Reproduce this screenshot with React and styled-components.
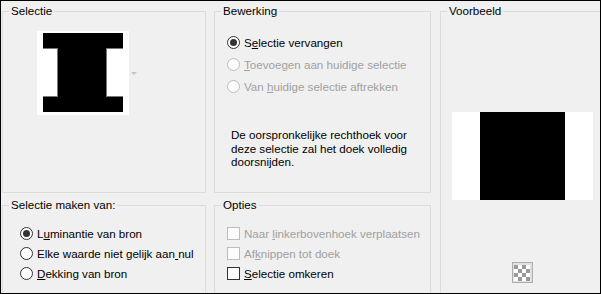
import React from 'react';
import styled, { createGlobalStyle } from 'styled-components';

const GlobalStyle = createGlobalStyle`
  html, body {
    margin: 0;
    padding: 0;
    background: #f0f0f0;
  }
  * {
    box-sizing: border-box;
  }
`;

const Window = styled.div`
  width: 601px;
  height: 294px;
  border: 1px solid #000;
  background: #f0f0f0;
  overflow: hidden;
  display: grid;
  grid-template-columns: 204px 217px 165px;
  grid-template-rows: 190px 100px;
  column-gap: 8px;
  row-gap: 4px;
  padding: 2px 0 0 1px;
  font-family: "Liberation Sans", Arial, sans-serif;
  font-size: 11.6px;
  color: #000;
`;

const Group = styled.fieldset`
  margin: 0;
  padding: 0;
  min-width: 0;
  border: 1px solid #dcdcdc;
  grid-column: ${p => p.$col};
  grid-row: ${p => p.$row};
  margin-left: ${p => p.$shift || 0}px;
`;

const Legend = styled.legend`
  margin-left: 6px;
  padding: 0 2px;
  line-height: 16px;
  font-size: 11.6px;
`;

const Picker = styled.div`
  display: flex;
  align-items: center;
  gap: 2px;
  margin: 12px 0 0 34px;
`;

const Options = styled.div`
  display: flex;
  flex-direction: column;
  margin: ${p => p.$top}px 0 0 ${p => p.$left}px;
`;

const Row = styled.div`
  display: flex;
  align-items: center;
  gap: 4px;
  height: ${p => p.$h}px;
  color: ${p => p.$disabled ? '#a0a0a0' : '#000'};
  white-space: nowrap;
`;

const Radio = styled.span`
  width: 13px;
  height: 13px;
  flex: none;
  border-radius: 50%;
  border: 1px solid ${p => p.$disabled ? '#bcbcbc' : '#333'};
  background: ${p => p.$disabled ? '#fcfcfc' : '#fff'};
  display: flex;
  align-items: center;
  justify-content: center;

  &::after {
    content: "";
    width: 7px;
    height: 7px;
    border-radius: 50%;
    background: #333;
    display: ${p => p.$checked ? 'block' : 'none'};
  }
`;

const Check = styled.span`
  width: 13px;
  height: 13px;
  flex: none;
  border: 1px solid ${p => p.$disabled ? '#bcbcbc' : '#333'};
  background: ${p => p.$disabled ? '#fcfcfc' : '#fff'};
`;

const Note = styled.p`
  margin: 30px 0 0 16px;
  width: 190px;
  line-height: 13.5px;
`;

const Preview = styled.div`
  display: flex;
  flex-direction: column;
  align-items: center;
  padding-top: 93px;
  gap: 62px;
`;

const PreviewImage = styled.div`
  width: 141px;
  height: 88px;
  background: #fff;
  display: flex;
  justify-content: center;

  &::before {
    content: "";
    width: 85px;
    height: 88px;
    background: #000;
  }
`;

const IconButton = styled.div`
  width: 21px;
  height: 21px;
  border: 1px solid #adadad;
  background: #e1e1e1;
  display: flex;
  align-items: center;
  justify-content: center;
`;

// underline the access key letter at index k
const Key = ({ text, k }) => (
  <span>
    {text.slice(0, k)}<u>{text[k]}</u>{text.slice(k + 1)}
  </span>
);

const ShapeI = () => (
  <svg width="92" height="84" viewBox="0 0 92 84">
    <rect width="92" height="84" fill="#fff" />
    <rect x="6" y="2" width="80" height="15" fill="#000" />
    <rect x="21" y="17" width="48" height="49" fill="#000" />
    <rect x="6" y="66" width="80" height="15" fill="#000" />
    <rect x="6" y="17" width="15" height="1" fill="#777" />
    <rect x="69" y="17" width="17" height="1" fill="#777" />
    <rect x="6" y="65" width="15" height="1" fill="#777" />
    <rect x="69" y="65" width="17" height="1" fill="#777" />
    <rect x="20" y="17" width="1" height="49" fill="#777" />
    <rect x="69" y="17" width="1" height="49" fill="#777" />
  </svg>
);

const Arrow = () => (
  <svg width="6" height="3" viewBox="0 0 6 3">
    <path d="M0 0H6L3 3Z" fill="#c4c4c4" />
  </svg>
);

const Checker = () => {
  const cells = [];
  for (let r = 0; r < 4; r++) {
    for (let c = 0; c < 4; c++) {
      cells.push(
        <rect key={r + '-' + c} x={c * 4} y={r * 4} width="4" height="4"
          fill={(r + c) % 2 === 0 ? '#9a9a9a' : '#fff'} />
      );
    }
  }
  return <svg width="16" height="16" viewBox="0 0 16 16">{cells}</svg>;
};

const App = () => {
  return (
    <>
      <GlobalStyle />
      <Window>
        <Group $col={1} $row={1}>
          <Legend>Selectie</Legend>
          <Picker>
            <ShapeI />
            <Arrow />
          </Picker>
        </Group>

        <Group $col={2} $row={1}>
          <Legend>Bewerking</Legend>
          <Options $top={12} $left={12}>
            <Row $h={22}><Radio $checked /><Key text="Selectie vervangen" k={1} /></Row>
            <Row $h={22} $disabled><Radio $disabled /><Key text="Toevoegen aan huidige selectie" k={0} /></Row>
            <Row $h={23} $disabled><Radio $disabled /><Key text="Van huidige selectie aftrekken" k={4} /></Row>
          </Options>
          <Note>De oorspronkelijke rechthoek voor deze selectie zal het doek volledig doorsnijden.</Note>
        </Group>

        <Group $col={3} $row="1 / 3" $shift={1}>
          <Legend>Voorbeeld</Legend>
          <Preview>
            <PreviewImage />
            <IconButton><Checker /></IconButton>
          </Preview>
        </Group>

        <Group $col={1} $row={2}>
          <Legend>Selectie maken van:</Legend>
          <Options $top={10} $left={17}>
            <Row $h={20}><Radio $checked /><Key text="Luminantie van bron" k={1} /></Row>
            <Row $h={20}><Radio /><Key text="Elke waarde niet gelijk aan nul" k={27} /></Row>
            <Row $h={20}><Radio /><Key text="Dekking van bron" k={0} /></Row>
          </Options>
        </Group>

        <Group $col={2} $row={2}>
          <Legend>Opties</Legend>
          <Options $top={10} $left={12}>
            <Row $h={20} $disabled><Check $disabled /><Key text="Naar linkerbovenhoek verplaatsen" k={5} /></Row>
            <Row $h={20} $disabled><Check $disabled /><Key text="Afknippen tot doek" k={2} /></Row>
            <Row $h={20}><Check /><Key text="Selectie omkeren" k={0} /></Row>
          </Options>
        </Group>
      </Window>
    </>
  );
};

export default App;
